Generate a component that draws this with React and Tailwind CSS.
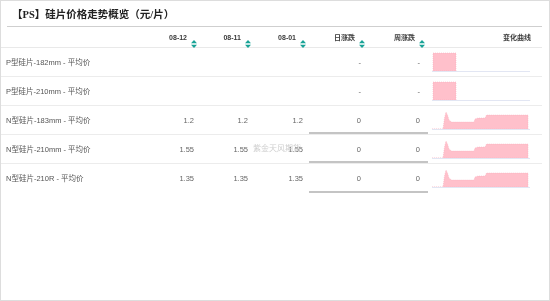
import React from 'react';

const rows = [
  { name: 'P型硅片-182mm - 平均价', v: ['', '', ''], d: '-', w: '-', chart: 'block' },
  { name: 'P型硅片-210mm - 平均价', v: ['', '', ''], d: '-', w: '-', chart: 'block' },
  { name: 'N型硅片-183mm - 平均价', v: ['1.2', '1.2', '1.2'], d: '0', w: '0', chart: 'spike' },
  { name: 'N型硅片-210mm - 平均价', v: ['1.55', '1.55', '1.55'], d: '0', w: '0', chart: 'spike' },
  { name: 'N型硅片-210R - 平均价', v: ['1.35', '1.35', '1.35'], d: '0', w: '0', chart: 'spike' },
];

function SortIcon() {
  return (
    <svg width="6" height="8" viewBox="0 0 6 8" className="mt-[7px] ml-[4px] shrink-0">
      <path d="M3 0 L6 3.3 L0 3.3 Z" fill="#19a397" />
      <path d="M0 4.7 L6 4.7 L3 8 Z" fill="#19a397" />
    </svg>
  );
}

function Spark({ type }) {
  return (
    <svg width="98" height="20" viewBox="0 0 98 20" className="block">
      {type === 'block' ? (
        <path d="M1 19 L1 1 L24 1 L24 19 Z" fill="#ffc0cb" stroke="#f7a8b8" strokeWidth="0.5" strokeDasharray="1 1" />
      ) : (
        <path d="M0 19 L11 19 L12.5 8 L14 2 L15.5 5 L17 10 L19.5 12 L42 12 L43 9 L46 8 L53 8 L54.5 5 L96 5 L96 19 Z" fill="#ffc0cb" stroke="#f7a8b8" strokeWidth="0.5" strokeDasharray="1 1" />
      )}
      <line x1="0" y1="19.5" x2="98" y2="19.5" stroke="#e2e6f3" strokeWidth="1" />
    </svg>
  );
}

export default function App() {
  const font = { fontFamily: '"Liberation Sans", Arial, "Noto Sans CJK SC", sans-serif' };
  const headers = ['08-12', '08-11', '08-01', '日涨跌', '周涨跌'];

  return (
    <div className="w-[550px] h-[301px] bg-white border border-[#dddddd] relative overflow-hidden will-change-transform" style={font}>
      <div className="pl-[11px] h-[25px] flex items-center pt-[3px]">
        <h1 className="text-[10.5px] font-bold text-[#222]" style={{ fontFamily: '"Liberation Serif", "Noto Sans CJK SC", serif' }}>
          【PS】硅片价格走势概览（元/片）
        </h1>
      </div>
      <div className="ml-[6px] w-[535px] h-px bg-[#cfcfcf]" />

      <div className="w-[541px]">
        <div className="grid grid-cols-[149px_50px_54px_55px_59px_60px_114px] h-[21px] border-b border-[#e9e9e9]">
          <div />
          {headers.map((h) => (
            <div key={h} className="flex justify-end items-start pr-[3px] pt-[6px]">
              <span className="text-[7px] font-bold text-[#3a3a3a] leading-[9px]">{h}</span>
              <SortIcon />
            </div>
          ))}
          <div className="flex justify-end pr-[11px] pt-[6px]">
            <span className="text-[7px] font-bold text-[#3a3a3a] leading-[9px]">变化曲线</span>
          </div>
        </div>

        {rows.map((r, i) => (
          <div
            key={r.name}
            className={`grid grid-cols-[149px_50px_54px_55px_59px_60px_114px] h-[29px] text-[7.5px] text-[#666] ${i < rows.length - 1 ? 'border-b border-[#ececec]' : ''}`}
          >
            <div className="pl-[5px] pt-[9px] text-[#555]">{r.name}</div>
            {r.v.map((v, j) => (
              <div key={j} className="text-right pr-[6px] pt-[9px]">{v}</div>
            ))}
            <div className={`text-right pr-[7px] pt-[9px] ${r.chart === 'spike' ? 'border-b-2 border-[#c4c4c4]' : ''}`}>{r.d}</div>
            <div className={`text-right pr-[8px] pt-[9px] ${r.chart === 'spike' ? 'border-b-2 border-[#c4c4c4]' : ''}`}>{r.w}</div>
            <div className="pl-[4px] pt-[4px]">
              <Spark type={r.chart} />
            </div>
          </div>
        ))}
      </div>

      <div className="absolute left-[252px] top-[141px] text-[8px] text-[#cfcfcf] pointer-events-none" style={{ fontFamily: '"Noto Sans CJK SC", sans-serif' }}>
        紫金天风期货
      </div>
    </div>
  );
}
